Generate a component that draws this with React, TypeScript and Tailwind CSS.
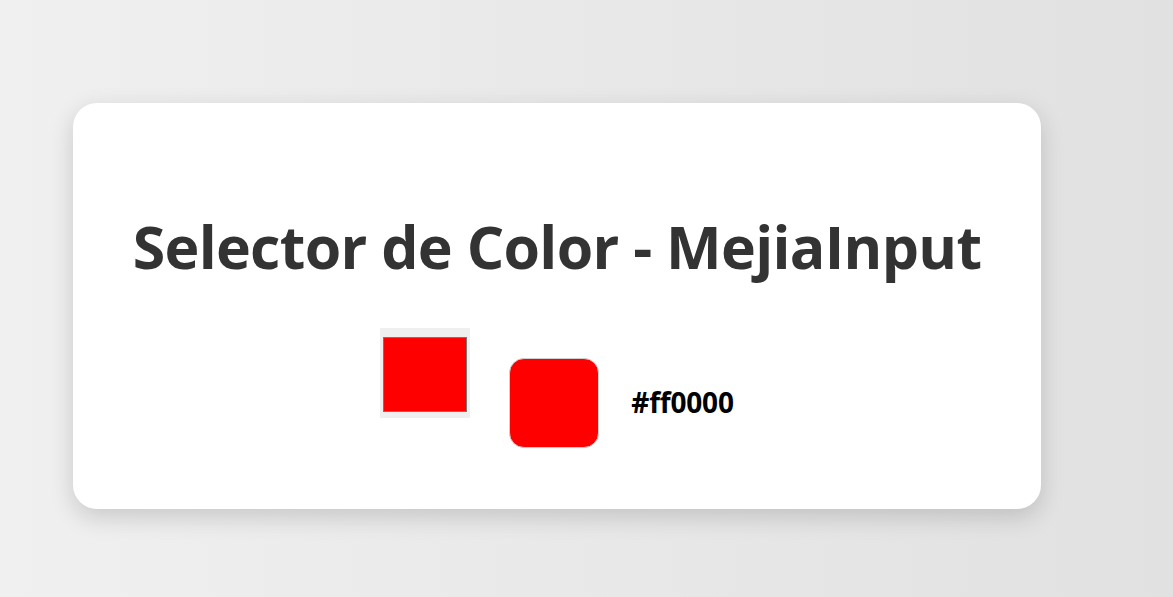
import React, { useState } from 'react';

const App: React.FC = () => {
    const [color] = useState('#ff0000');

    return (
        <div className="min-h-[597px] w-full bg-gradient-to-r from-[#f0f0f0] to-[#e1e1e1] pt-[103px] pl-[73px]" style={{ fontFamily: '"Open Sans", "Noto Sans", sans-serif' }}>
            <div className="w-[968px] h-[406px] bg-white rounded-[24px] shadow-[0_8px_24px_rgba(0,0,0,0.16)] flex flex-col items-center pt-[107px]">
                <h1 className="text-[59px] leading-[72px] font-bold text-[#333333] tracking-[-0.7px]">
                    Selector de Color - MejiaInput
                </h1>
                <div className="flex items-start mt-[46px]">
                    <div className="w-[90px] h-[90px] bg-[#efefef] pt-[9px] pb-[6px] px-[3px]">
                        <div className="w-full h-full border border-[#767676]" style={{ backgroundColor: color }} />
                    </div>
                    <div
                        className="ml-[39px] mt-[30px] w-[90px] h-[90px] rounded-[15px] border border-[#d0d0d0]"
                        style={{ backgroundColor: color }}
                    />
                    <span className="ml-[32px] mt-[58px] text-[28px] leading-[32px] font-bold text-black tracking-[-0.2px]">{color}</span>
                </div>
            </div>
        </div>
    );
};

export default App;
